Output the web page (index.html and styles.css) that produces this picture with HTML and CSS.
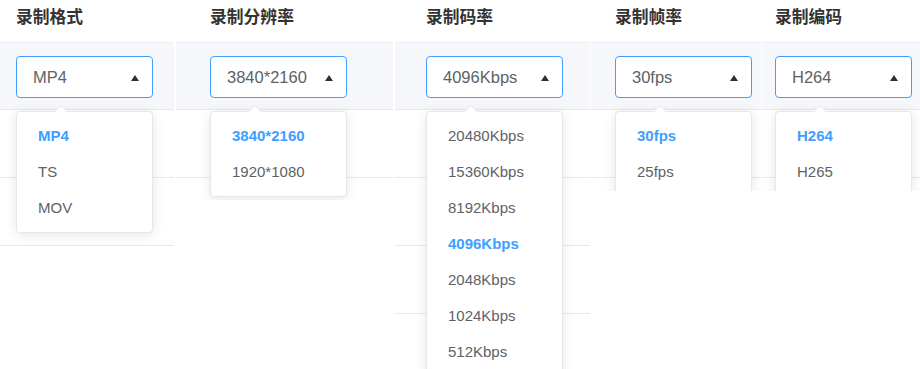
FILE: index.html
```html
<!DOCTYPE html>
<html lang="zh-CN">
<head>
    <meta charset="UTF-8">
    <meta name="viewport" content="width=device-width, initial-scale=1.0">
    <title>录制设置</title>
    <link rel="stylesheet" href="styles.css">
</head>
<body>
    <div class="table">
        <!-- 录制格式 -->
        <div class="col col-format">
            <div class="head">录制格式</div>
            <div class="band">
                <div class="select">
                    <span class="value">MP4</span>
                    <span class="caret"></span>
                    <ul class="menu">
                        <li class="active">MP4</li>
                        <li>TS</li>
                        <li>MOV</li>
                    </ul>
                </div>
            </div>
            <div class="row"></div>
            <div class="row"></div>
        </div>

        <!-- 录制分辨率 -->
        <div class="col col-size">
            <div class="head">录制分辨率</div>
            <div class="band">
                <div class="select">
                    <span class="value">3840*2160</span>
                    <span class="caret"></span>
                    <ul class="menu">
                        <li class="active">3840*2160</li>
                        <li>1920*1080</li>
                    </ul>
                </div>
            </div>
            <div class="row"></div>
            <div class="row"></div>
        </div>

        <!-- 录制码率 -->
        <div class="col col-rate">
            <div class="head">录制码率</div>
            <div class="band">
                <div class="select">
                    <span class="value">4096Kbps</span>
                    <span class="caret"></span>
                    <ul class="menu">
                        <li>20480Kbps</li>
                        <li>15360Kbps</li>
                        <li>8192Kbps</li>
                        <li class="active">4096Kbps</li>
                        <li>2048Kbps</li>
                        <li>1024Kbps</li>
                        <li>512Kbps</li>
                    </ul>
                </div>
            </div>
            <div class="row"></div>
            <div class="row"></div>
            <div class="row"></div>
            <div class="row"></div>
        </div>

        <!-- 录制帧率 -->
        <div class="col col-fps">
            <div class="head">录制帧率</div>
            <div class="band">
                <div class="select">
                    <span class="value">30fps</span>
                    <span class="caret"></span>
                    <ul class="menu">
                        <li class="active">30fps</li>
                        <li>25fps</li>
                    </ul>
                </div>
            </div>
            <div class="row"></div>
            <div class="row"></div>
        </div>

        <!-- 录制编码 -->
        <div class="col col-codec">
            <div class="head">录制编码</div>
            <div class="band">
                <div class="select">
                    <span class="value">H264</span>
                    <span class="caret"></span>
                    <ul class="menu">
                        <li class="active">H264</li>
                        <li>H265</li>
                    </ul>
                </div>
            </div>
            <div class="row"></div>
            <div class="row"></div>
        </div>
    </div>
</body>
</html>
```

FILE: styles.css
```css
* {
    margin: 0;
    padding: 0;
    box-sizing: border-box;
}

body {
    width: 920px;
    height: 369px;
    overflow: hidden;
    background: #ffffff;
    font-family: "Liberation Sans", "Noto Sans CJK SC", sans-serif;
}

.table {
    display: flex;
    gap: 2px;
    width: 920px;
}

.col {
    flex: none;
    overflow: hidden;
}

.col-format { width: 174px; height: 247px; }
.col-size   { width: 217px; height: 200px; }
.col-rate   { width: 195px; height: 369px; }
.col-fps    { width: 170px; height: 191px; margin-left: -1px; }
.col-codec  { width: 158px; height: 191px; margin-left: -1px; }

.col-format .head, .col-format .band { padding-left: 16px; }
.col-size .head,   .col-size .band   { padding-left: 34px; }
.col-rate .head,   .col-rate .band   { padding-left: 31px; }
.col-fps .head,    .col-fps .band    { padding-left: 24px; }
.col-codec .head,  .col-codec .band  { padding-left: 13px; }

.head {
    height: 42px;
    line-height: 35px;
    font-size: 16.8px;
    font-weight: bold;
    color: #333333;
    white-space: nowrap;
}

.band {
    height: 68px;
    padding-top: 13px;
    background: #f5f7fa;
    border-top: 1px solid #ebeef5;
    border-bottom: 1px solid #e6e9ef;
}

.row {
    height: 68px;
    border-bottom: 1px solid #e6e9ef;
}

.select {
    position: relative;
    display: flex;
    align-items: center;
    width: 137px;
    height: 42px;
    padding-left: 16px;
    background: #ffffff;
    border: 1px solid #409eff;
    border-radius: 4px;
    font-size: 16.5px;
    color: #606266;
}

.caret {
    position: absolute;
    right: 13px;
    top: 18px;
    width: 0;
    height: 0;
    border-left: 4px solid transparent;
    border-right: 4px solid transparent;
    border-bottom: 6px solid #303133;
}

.menu {
    position: absolute;
    top: 54px;
    left: -1px;
    width: 137px;
    padding: 6px 0;
    list-style: none;
    background: #ffffff;
    border: 1px solid #e4e7ed;
    border-radius: 4px;
    box-shadow: 0 2px 12px 0 rgba(0, 0, 0, 0.1);
    z-index: 2;
}

.menu::before,
.menu::after {
    content: "";
    position: absolute;
    left: 38px;
    width: 0;
    height: 0;
    border-left: 6px solid transparent;
    border-right: 6px solid transparent;
}

.menu::before {
    top: -7px;
    border-bottom: 6px solid #e4e7ed;
}

.menu::after {
    top: -6px;
    border-bottom: 6px solid #ffffff;
}

.menu li {
    height: 36px;
    line-height: 36px;
    padding-left: 21px;
    font-size: 15px;
    color: #606266;
    white-space: nowrap;
}

.menu li.active {
    color: #409eff;
    font-weight: bold;
}
```
